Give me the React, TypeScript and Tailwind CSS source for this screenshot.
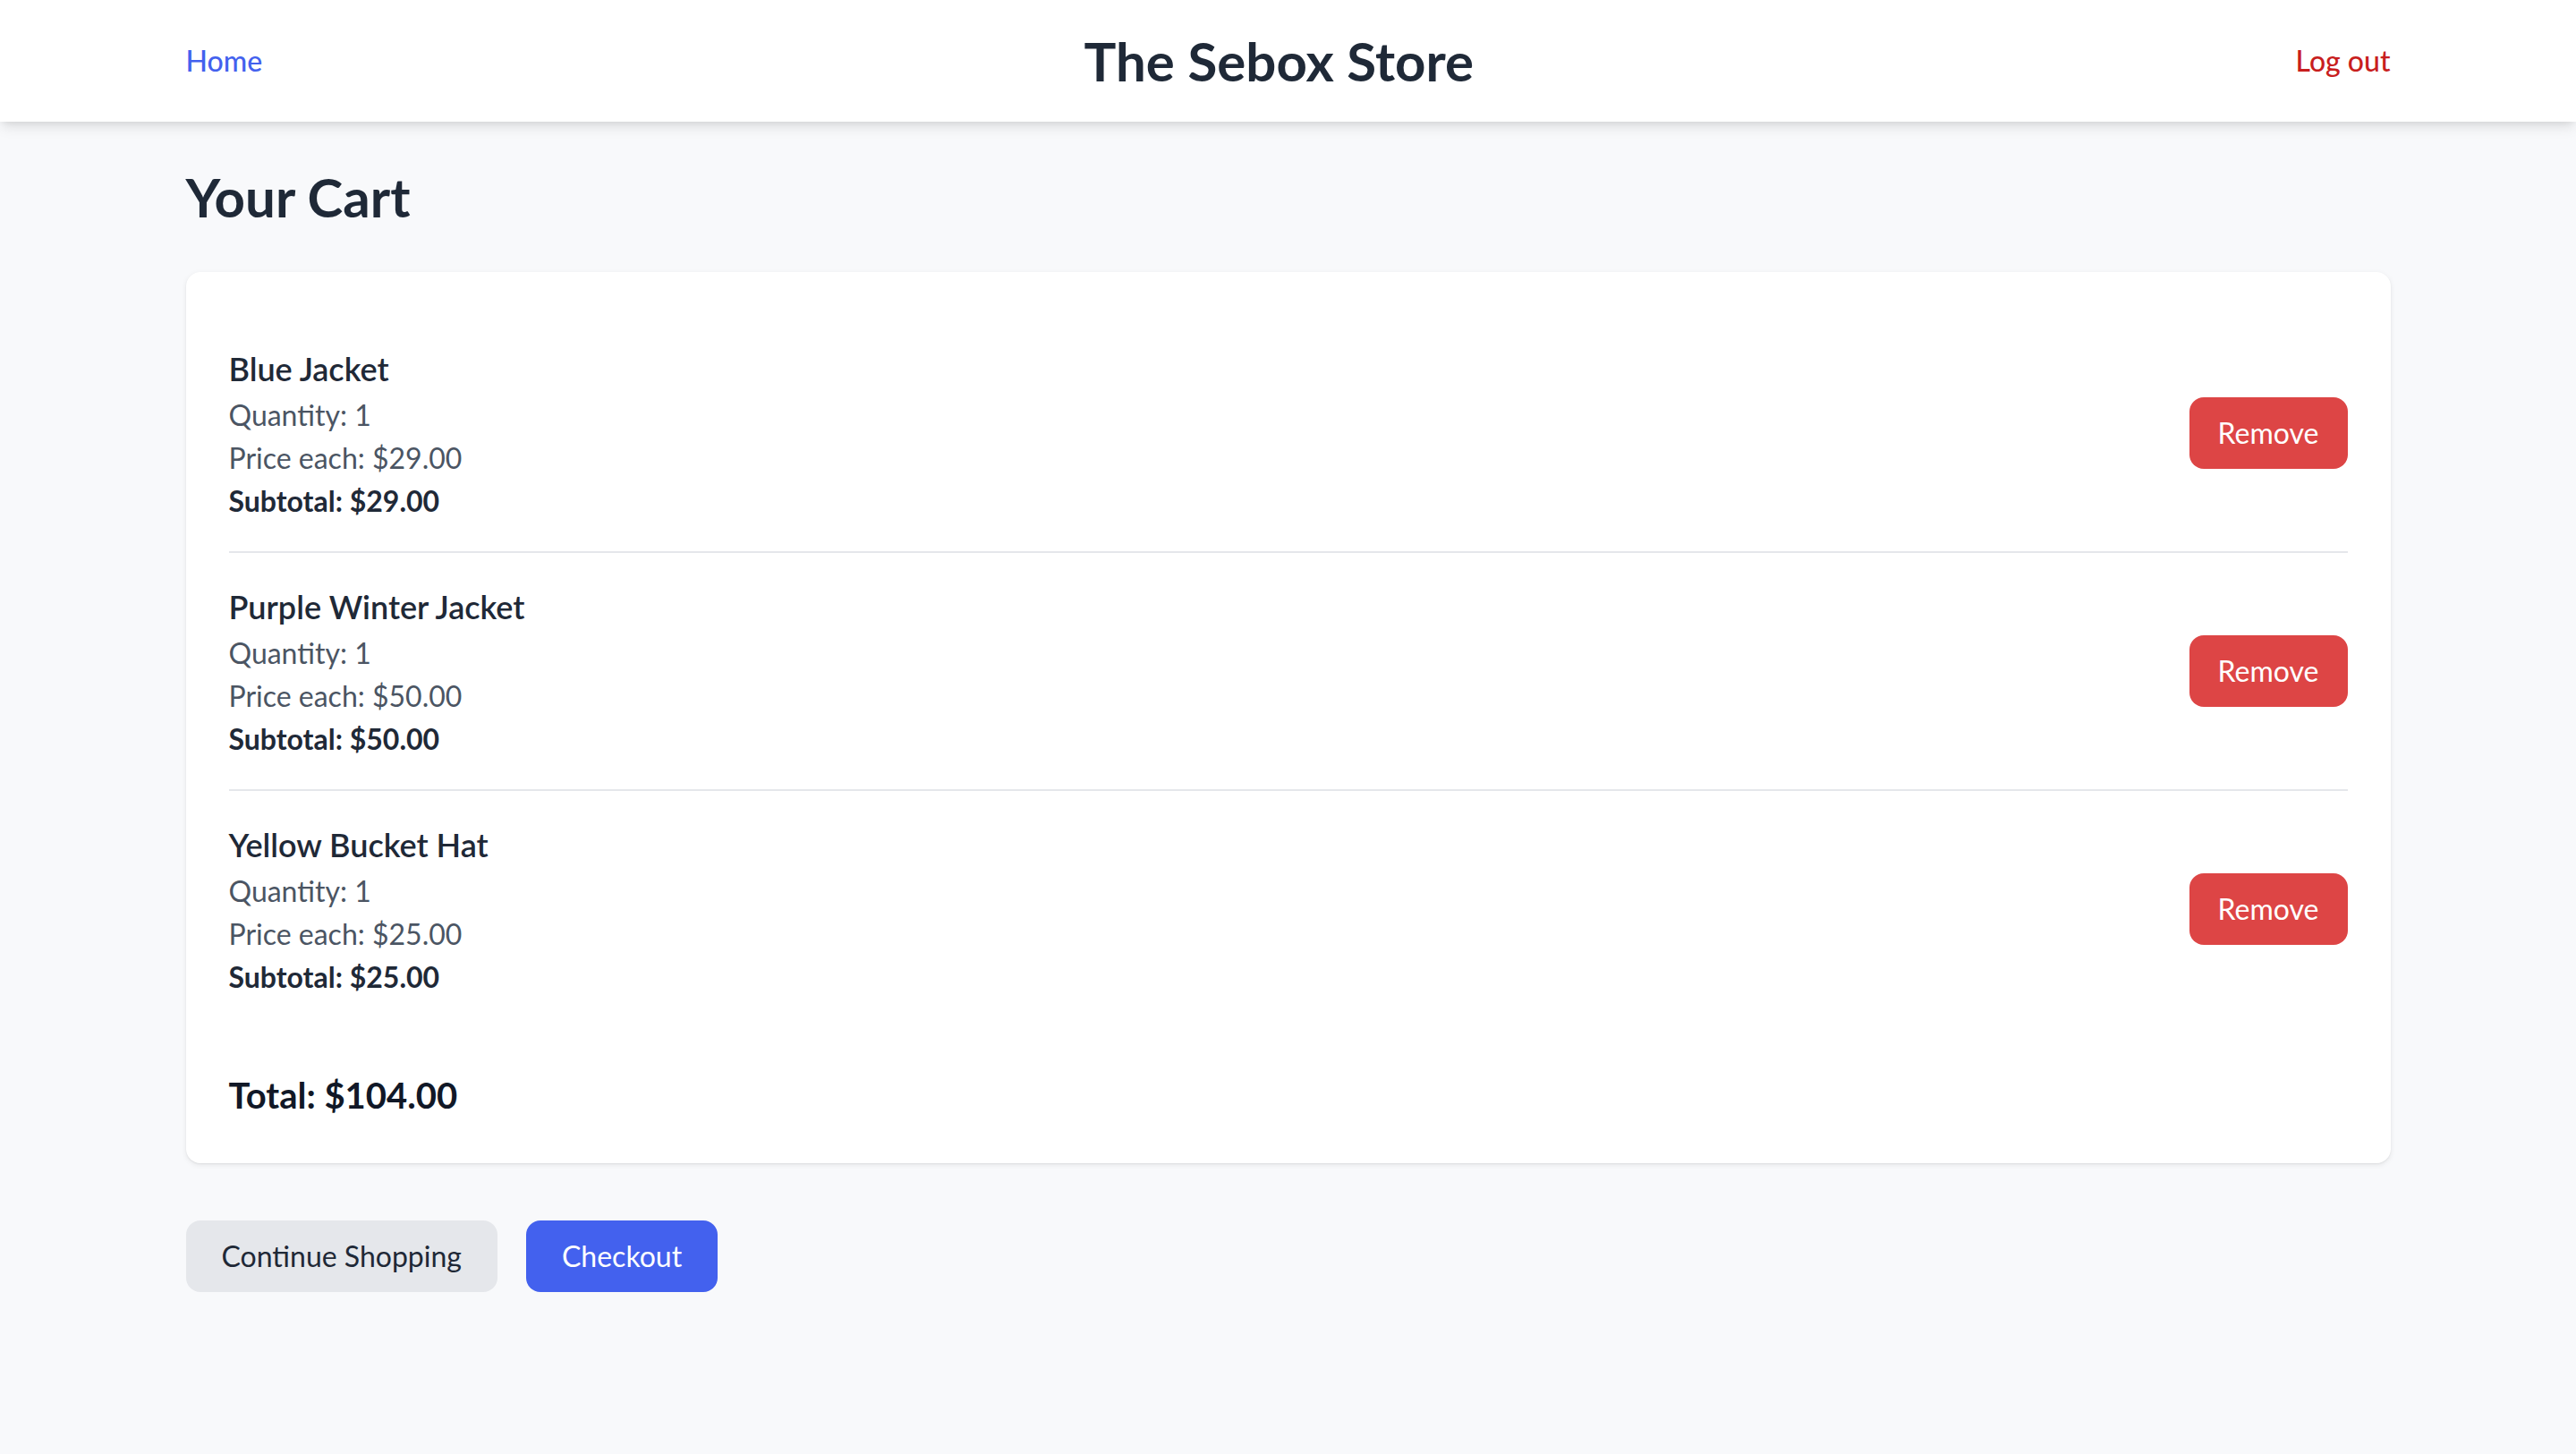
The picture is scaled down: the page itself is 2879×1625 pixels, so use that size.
import React from 'react';

const cartItems = [
  { id: 1, name: 'Blue Jacket', quantity: 1, price: 29 },
  { id: 2, name: 'Purple Winter Jacket', quantity: 1, price: 50 },
  { id: 3, name: 'Yellow Bucket Hat', quantity: 1, price: 25 },
];

const money = (n: number) => `$${n.toFixed(2)}`;

function CartRow({ item }: { item: (typeof cartItems)[number] }) {
  return (
    <div className="flex items-center justify-between py-[32px] border-b-2 border-[#e5e7eb] last:border-b-0">
      <div>
        <h2 className="text-[36px] leading-[56px] font-semibold text-[#1f2937]">{item.name}</h2>
        <p className="text-[32px] leading-[48px] text-[#4b5563]">Quantity: {item.quantity}</p>
        <p className="text-[32px] leading-[48px] text-[#4b5563]">Price each: {money(item.price)}</p>
        <p className="text-[32px] leading-[48px] font-bold text-[#1f2937]">
          Subtotal: {money(item.price * item.quantity)}
        </p>
      </div>
      <button className="bg-[#dd4545] text-white text-[32px] leading-[48px] px-[32px] py-[16px] rounded-[16px]">
        Remove
      </button>
    </div>
  );
}

export default function App() {
  const total = cartItems.reduce((sum, i) => sum + i.price * i.quantity, 0);

  return (
    <div className="min-h-screen bg-[#f8f9fb] font-['Lato','Open_Sans',sans-serif]">
      <header className="bg-white shadow-[0_8px_14px_-2px_rgba(0,0,0,0.1),0_4px_8px_-4px_rgba(0,0,0,0.1)]">
        <div className="mx-auto max-w-[2560px] px-[48px] py-[32px] flex items-center justify-between">
          <a href="#" className="text-[32px] leading-[48px] font-medium text-[#4361ee]">Home</a>
          <h1 className="text-[60px] leading-[72px] font-bold text-[#1f2937]">The Sebox Store</h1>
          <button className="text-[32px] leading-[48px] font-medium text-[#c81e1e]">Log out</button>
        </div>
      </header>

      <main className="mx-auto max-w-[2560px] px-[48px] py-[48px]">
        <h1 className="text-[60px] leading-[72px] font-bold text-[#1f2937] mb-[48px]">Your Cart</h1>

        <div className="bg-white rounded-[16px] p-[48px] shadow-[0_2px_6px_rgba(0,0,0,0.08),0_1px_2px_rgba(0,0,0,0.06)]">
          <div>
            {cartItems.map((item) => (
              <CartRow key={item.id} item={item} />
            ))}
          </div>
          <div className="mt-[48px] text-[40px] leading-[56px] font-bold text-[#111827]">
            Total: {money(total)}
          </div>
        </div>

        <div className="mt-[64px] flex gap-[32px]">
          <button className="bg-[#e5e7eb] text-[#1f2937] text-[32px] leading-[48px] px-[40px] py-[16px] rounded-[16px]">
            Continue Shopping
          </button>
          <button className="bg-[#4361ee] text-white text-[32px] leading-[48px] px-[40px] py-[16px] rounded-[16px]">
            Checkout
          </button>
        </div>
      </main>
    </div>
  );
}
